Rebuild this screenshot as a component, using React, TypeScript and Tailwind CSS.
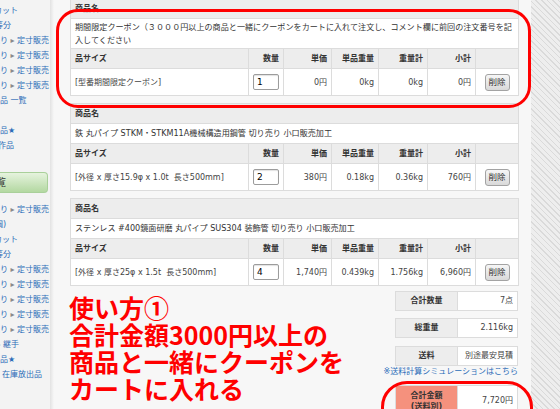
import React from "react";

type Product = {
  name: React.ReactNode;
  size: string;
  qty: number;
  price: string;
  unitWeight: string;
  totalWeight: string;
  subtotal: string;
  nameRow: string;
};

const products: Product[] = [
  {
    name: (
      <>
        期間限定クーポン（３０００円以上の商品と一緒にクーポンをカートに入れて注文し、コメント欄に前回の注文番号を記
        <br />
        入してください
      </>
    ),
    nameRow: "h-[30px]",
    size: "[型番期間限定クーポン]",
    qty: 1,
    price: "0円",
    unitWeight: "0kg",
    totalWeight: "0kg",
    subtotal: "0円",
  },
  {
    name: "鉄 丸パイプ STKM・STKM11A機械構造用鋼管 切り売り 小口販売加工",
    nameRow: "h-[20px]",
    size: "[外径 x 厚さ15.9φ x 1.0t\u00a0\u00a0長さ500mm]",
    qty: 2,
    price: "380円",
    unitWeight: "0.18kg",
    totalWeight: "0.36kg",
    subtotal: "760円",
  },
  {
    name: "ステンレス #400鏡面研磨 丸パイプ SUS304 装飾管 切り売り 小口販売加工",
    nameRow: "h-[20px]",
    size: "[外径 x 厚さ25φ x 1.5t\u00a0\u00a0長さ500mm]",
    qty: 4,
    price: "1,740円",
    unitWeight: "0.439kg",
    totalWeight: "1.756kg",
    subtotal: "6,960円",
  },
];

const cell = "border border-[#dcdcdc] px-[4px]";
const head = `${cell} bg-[#ededed] font-bold text-[#333]`;

function ProductTable({ p }: { p: Product }) {
  return (
    <table className="w-[448px] table-fixed border-collapse text-[8px] leading-[13px] text-[#444]">
      <colgroup>
        <col className="w-[178px]" />
        <col className="w-[35px]" />
        <col className="w-[48px]" />
        <col className="w-[47px]" />
        <col className="w-[49px]" />
        <col className="w-[48px]" />
        <col className="w-[43px]" />
      </colgroup>
      <tbody>
        <tr className="h-[20px]">
          <td colSpan={7} className={`${head} text-left`}>
            商品名
          </td>
        </tr>
        <tr className={p.nameRow}>
          <td colSpan={7} className={`${cell} bg-white text-[8.1px] text-[#333]`}>
            {p.name}
          </td>
        </tr>
        <tr className="h-[20px]">
          <td className={`${head} text-left`}>品サイズ</td>
          <td className={`${head} text-right`}>数量</td>
          <td className={`${head} text-right`}>単価</td>
          <td className={`${head} text-right`}>単品重量</td>
          <td className={`${head} text-right`}>重量計</td>
          <td className={`${head} text-right`}>小計</td>
          <td className={head}></td>
        </tr>
        <tr className="h-[27px] bg-white">
          <td className={cell}>{p.size}</td>
          <td className={cell}>
            <div className="flex h-[16px] w-[26px] items-center rounded-[2px] border border-[#9c9c9c] bg-white pl-[3px] text-[9px] text-black shadow-[inset_0_1px_1px_rgba(0,0,0,0.12)]">
              {p.qty}
            </div>
          </td>
          <td className={`${cell} text-right`}>{p.price}</td>
          <td className={`${cell} text-right`}>{p.unitWeight}</td>
          <td className={`${cell} text-right`}>{p.totalWeight}</td>
          <td className={`${cell} text-right`}>{p.subtotal}</td>
          <td className={`${cell} text-center`}>
            <button className="h-[17px] w-[25px] rounded-[3px] border border-[#a3a3a3] bg-gradient-to-b from-[#f6f6f6] to-[#d9d9d9] text-[8.5px] leading-[15px] text-[#333]">
              削除
            </button>
          </td>
        </tr>
      </tbody>
    </table>
  );
}

function Teisun() {
  return (
    <div className="-ml-[24px] whitespace-nowrap">
      切り売り <span className="text-[#8a8a8a]">▸</span> 定寸販売
    </div>
  );
}

function Sidebar() {
  return (
    <aside className="w-[50px] shrink-0 overflow-hidden bg-[#f3f3f3] pt-[3px] text-[8px] leading-[15px] text-[#2b6cb8]">
      <div className="-ml-[22px] whitespace-nowrap">端材カット</div>
      <div className="-ml-[13px] whitespace-nowrap">二等分</div>
      <Teisun />
      <Teisun />
      <Teisun />
      <Teisun />
      <div className="-ml-[8px] whitespace-nowrap">商品 一覧</div>

      <div className="mt-[15px] -ml-[16px] whitespace-nowrap">新商品★</div>
      <div className="-ml-[10px] whitespace-nowrap">製作品</div>

      <div className="mt-[19px] h-[21px] w-[48px] overflow-hidden rounded-r-[4px] border border-l-0 border-[#a9d09a] bg-gradient-to-b from-[#e6f3de] to-[#b3d8a1] text-[10px] leading-[20px] text-[#333]">
        <div className="-ml-[34px] whitespace-nowrap">在庫一覧</div>
      </div>

      <div className="mt-[9px]">
        <Teisun />
        <div className="-ml-[16px] whitespace-nowrap">(鉄鋼)</div>
        <div className="-ml-[22px] whitespace-nowrap">端材カット</div>
        <div className="-ml-[13px] whitespace-nowrap">二等分</div>
        <Teisun />
        <Teisun />
        <Teisun />
        <Teisun />
        <Teisun />
        <div className="-ml-[22px] whitespace-nowrap">
          配管 <span className="text-[#8a8a8a]">▸</span> 継手
        </div>
        <div className="-ml-[16px] whitespace-nowrap">新商品★</div>
        <div className="ml-[2px] whitespace-nowrap">在庫放出品</div>
      </div>
    </aside>
  );
}

function SumRow({ label, value }: { label: string; value: string }) {
  return (
    <div className="flex h-[20px] w-[123px] border border-[#dcdcdc] text-[8px] leading-[18px]">
      <div className="w-[62px] shrink-0 border-r border-[#dcdcdc] bg-[#ededed] text-center font-bold text-[#333]">
        {label}
      </div>
      <div className="flex-1 bg-white pr-[4px] text-right text-[#444]">{value}</div>
    </div>
  );
}

export default function App() {
  return (
    <div className="flex h-[409px] w-[560px] overflow-hidden bg-white font-['DejaVu_Sans','Noto_Sans_CJK_JP',sans-serif]">
      <Sidebar />
      <div className="w-[4px] shrink-0 bg-gradient-to-r from-[#e2e2e2] to-[#f7f7f7]" />

      <main className="w-[477px] shrink-0 bg-[#f7f7f7] pl-[16px] pr-[13px]">
        <div className="-mt-[2px] flex flex-col gap-[7px]">
          <div className="relative">
            <ProductTable p={products[0]} />
            <div className="pointer-events-none absolute -left-[14px] -right-[13px] top-[11px] -bottom-[12px] rounded-[22px] border-[3px] border-[#ff0000]" />
          </div>
          <ProductTable p={products[1]} />
          <ProductTable p={products[2]} />
        </div>

        <div className="flex items-start justify-between">
          <div className="-ml-[1px] mt-[8px] whitespace-nowrap font-['Noto_Sans_CJK_JP',sans-serif] text-[25px] font-bold leading-[27px] text-[#ff0000]">
            <div>使い方①</div>
            <div>合計金額3000円以上の</div>
            <div>商品と一緒にクーポンを</div>
            <div>カートに入れる</div>
          </div>

          <div className="mt-[5px] flex w-[123px] flex-col">
            <SumRow label="合計数量" value="7点" />
            <div className="mt-[7px]">
              <SumRow label="総重量" value="2.116kg" />
            </div>
            <div className="mt-[8px]">
              <SumRow label="送料" value="別途最安見積" />
            </div>
            <div className="flex justify-end whitespace-nowrap text-[8px] leading-[12px] text-[#2b6cb8]">
              ※送料計算シミュレーションはこちら
            </div>
            <div className="relative mt-[7px]">
              <div className="flex w-[123px] border border-[#dcdcdc] text-[8px]">
                <div className="flex w-[62px] shrink-0 flex-col items-center border-r border-[#dcdcdc] bg-[#f5917d] py-[4px] font-bold leading-[11px] text-[#333]">
                  <span>合計金額</span>
                  <span>(送料別)</span>
                </div>
                <div className="flex flex-1 items-center justify-end bg-white pr-[4px] text-[#444]">
                  7,720円
                </div>
              </div>
              <div className="pointer-events-none absolute -left-[14px] -right-[15px] -top-[4px] h-[60px] rounded-[26px] border-[3px] border-[#ff0000]" />
            </div>
          </div>
        </div>
      </main>

      <div className="flex-1 bg-[#eeeeee] bg-[image:repeating-linear-gradient(45deg,#dadada_0px,#dadada_1px,transparent_1px,transparent_4px)]" />
    </div>
  );
}
